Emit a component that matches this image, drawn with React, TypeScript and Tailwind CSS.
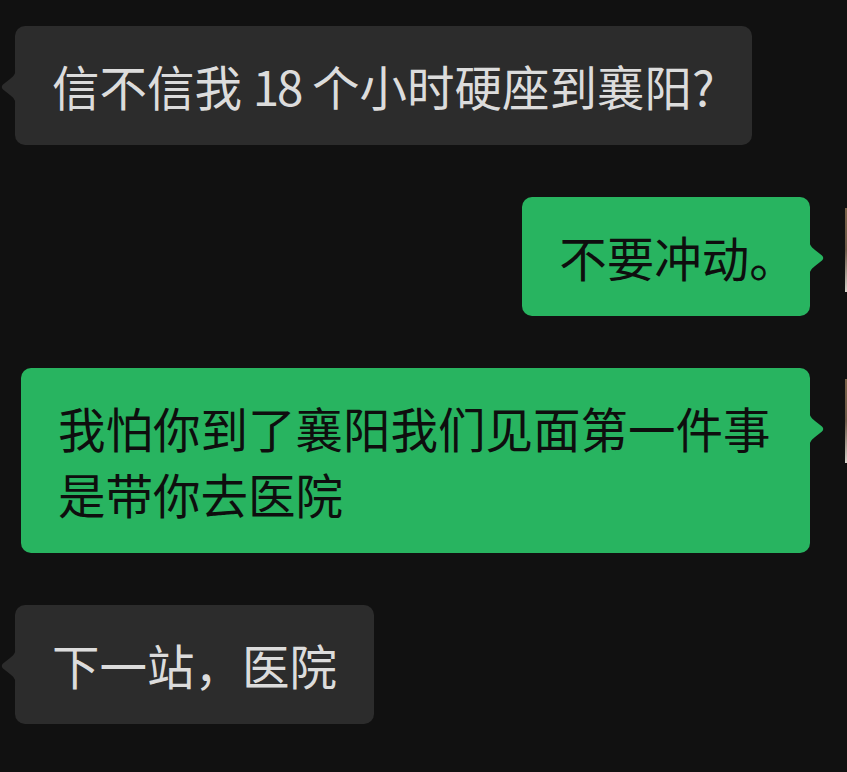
const font = {
  fontFamily: '"Noto Sans CJK SC", "Noto Sans", sans-serif',
}

type Msg = { side: 'left' | 'right'; text: React.ReactNode }

const messages: Msg[] = [
  {
    side: 'left',
    text: (
      <>
        信不信我 <span className="tracking-[-2px]">18</span> 个小时硬座到襄阳?
      </>
    ),
  },
  {
    side: 'right',
    text: (
      <>
        不要冲动<span className="[font-feature-settings:'halt']">。</span>
      </>
    ),
  },
  { side: 'right', text: '我怕你到了襄阳我们见面第一件事是带你去医院' },
  { side: 'left', text: '下一站，医院' },
]

const Tail = ({ side, color }: { side: 'left' | 'right'; color: string }) => (
  <svg
    width="16"
    height="40"
    viewBox="0 0 16 40"
    className={
      side === 'right'
        ? 'absolute top-[41px] -right-[15px]'
        : 'absolute top-[41px] -left-[15px] -scale-x-100'
    }
  >
    <path
      d="M0,0 C0,6 2,9 6,12 L13,17.5 Q15.5,20 13,22.5 L6,28 C2,31 0,34 0,40 Z"
      fill={color}
    />
  </svg>
)

const Bubble = ({ msg }: { msg: Msg }) => {
  const mine = msg.side === 'right'
  const color = mine ? '#28b460' : '#2c2c2c'
  return (
    <div className={mine ? 'flex justify-end pr-[37px] relative' : 'flex pl-[15px]'}>
      <div
        className={
          mine
            ? 'relative max-w-[789px] rounded-[10px] bg-[#28b460] px-[37px] py-[26.5px] text-[47.5px] leading-[66px] text-[#0e0e0e]'
            : 'relative max-w-[789px] rounded-[10px] bg-[#2c2c2c] px-[37px] py-[26.5px] text-[47.5px] leading-[66px] text-[#dcdcdc]'
        }
        style={font}
      >
        <Tail side={msg.side} color={color} />
        {msg.text}
      </div>
      {mine && (
        // edge of the avatar, mostly off screen
        <div className="absolute top-[11px] right-0 w-[2px] h-[84px] bg-gradient-to-b from-[#7a6249] via-[#6d5a48] to-[#d8d4cc]" />
      )}
    </div>
  )
}

const App = () => {
  return (
    <div className="min-h-screen w-[847px] bg-[#111111] overflow-hidden">
      <div className="flex flex-col gap-[52px] pt-[26px] pb-[40px]">
        {messages.map((m, i) => (
          <Bubble key={i} msg={m} />
        ))}
      </div>
    </div>
  )
}

export default App
